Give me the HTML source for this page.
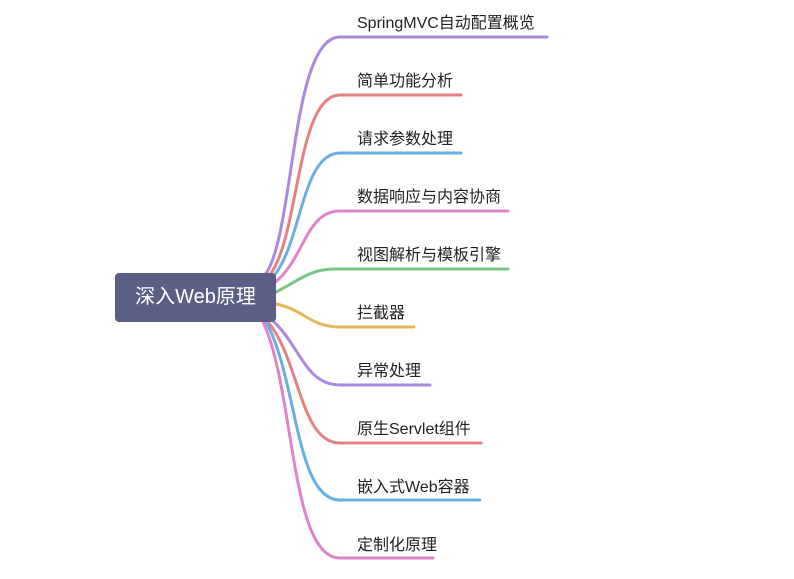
<!DOCTYPE html><html><head><meta charset="utf-8"><style>
body{margin:0;width:794px;height:579px;background:#fff;overflow:hidden;font-family:"Liberation Sans","Noto Sans CJK SC",sans-serif}
.root{position:absolute;left:115px;top:273px;width:161px;height:49px;background:#5b5f86;border-radius:4px;color:#fff;font-size:20px;line-height:49px;text-align:center}
.l{position:absolute;left:357px;font-size:16px;color:#222;white-space:nowrap}
</style></head><body>
<svg width="794" height="579" style="position:absolute;left:0;top:0" fill="none" stroke-width="3" stroke-linecap="round">
<path d="M264 276 C295 240 290 37 340 37 L547 37" stroke="#a98ae0"/>
<path d="M267 278 C300 245 295 95 340 95 L461 95" stroke="#e3827f"/>
<path d="M270 280 C302 250 300 153 340 153 L461 153" stroke="#6aafe2"/>
<path d="M273 284 C305 260 305 211 340 211 L508 211" stroke="#de84c9"/>
<path d="M276 292 C300 280 310 269 335 269 L508 269" stroke="#7cc483"/>
<path d="M276 304 C305 310 310 327 340 327 L414 327" stroke="#e2b85a"/>
<path d="M272 320 C300 345 305 385 340 385 L430 385" stroke="#a98ae0"/>
<path d="M268 322 C300 360 300 443 340 443 L481 443" stroke="#e3827f"/>
<path d="M266 322 C298 380 295 500 340 500 L480 500" stroke="#6aafe2"/>
<path d="M263 322 C295 390 290 558 340 558 L433 558" stroke="#de84c9"/>
</svg>
<div class="root">深入Web原理</div>
<div class="l" style="top:9px">SpringMVC自动配置概览</div>
<div class="l" style="top:67px">简单功能分析</div>
<div class="l" style="top:125px">请求参数处理</div>
<div class="l" style="top:183px">数据响应与内容协商</div>
<div class="l" style="top:241px">视图解析与模板引擎</div>
<div class="l" style="top:299px">拦截器</div>
<div class="l" style="top:357px">异常处理</div>
<div class="l" style="top:415px">原生Servlet组件</div>
<div class="l" style="top:473px">嵌入式Web容器</div>
<div class="l" style="top:531px">定制化原理</div>
</body></html>
